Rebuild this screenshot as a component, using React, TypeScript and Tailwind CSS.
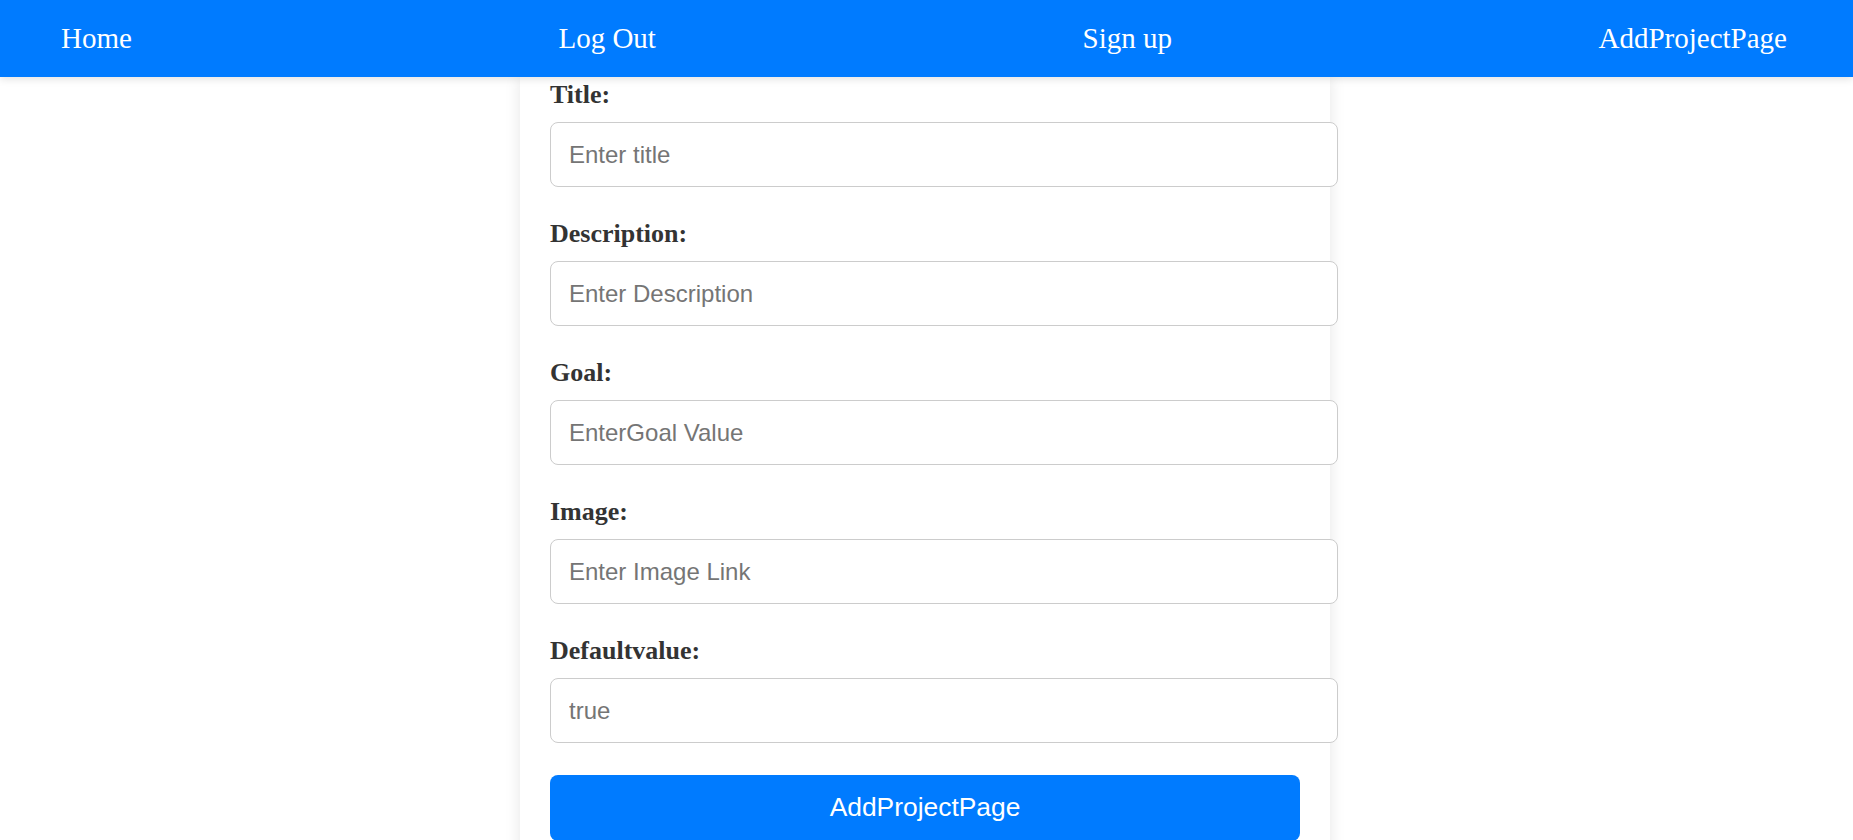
import React from 'react';

const NavBar: React.FC = () => {
  const links = ['Home', 'Log Out', 'Sign up', 'AddProjectPage'];
  return (
    <nav className="relative z-10 flex h-[77px] items-center justify-between bg-[#007bff] pl-[61px] pr-[66px] shadow-[0_2px_8px_rgba(0,0,0,0.12)]">
      {links.map((link) => (
        <a key={link} href="#" className="font-['Liberation_Serif',serif] text-[29px] leading-normal text-white">
          {link}
        </a>
      ))}
    </nav>
  );
};

const AddProjectForm: React.FC = () => {
  const fields = [
    { label: 'Title:', placeholder: 'Enter title' },
    { label: 'Description:', placeholder: 'Enter Description' },
    { label: 'Goal:', placeholder: 'EnterGoal Value' },
    { label: 'Image:', placeholder: 'Enter Image Link' },
    { label: 'Defaultvalue:', placeholder: 'true' },
  ];

  return (
    <div className="ml-[520px] w-[810px] bg-white px-[30px] pt-[3px] pb-[30px] shadow-[0_0_15px_rgba(0,0,0,0.1)]">
      <form className="flex flex-col gap-[32px]">
        {fields.map((field) => (
          <div key={field.label} className="flex flex-col">
            <label className="mb-[13px] font-['Liberation_Serif',serif] text-[26px] font-bold leading-[29px] text-[#333]">
              {field.label}
            </label>
            <input
              type="text"
              placeholder={field.placeholder}
              className="h-[65px] w-[788px] rounded-[8px] border border-[#ccc] bg-white px-[18px] font-['Liberation_Sans',sans-serif] text-[24px] text-[#333] placeholder:text-[#757575] outline-none"
            />
          </div>
        ))}
        <button
          type="button"
          className="h-[66px] w-[750px] rounded-[8px] bg-[#007bff] font-['Liberation_Sans',sans-serif] text-[26.4px] text-white"
        >
          AddProjectPage
        </button>
      </form>
    </div>
  );
};

export default function App() {
  return (
    <div className="min-h-screen bg-white">
      <NavBar />
      <AddProjectForm />
    </div>
  );
}
